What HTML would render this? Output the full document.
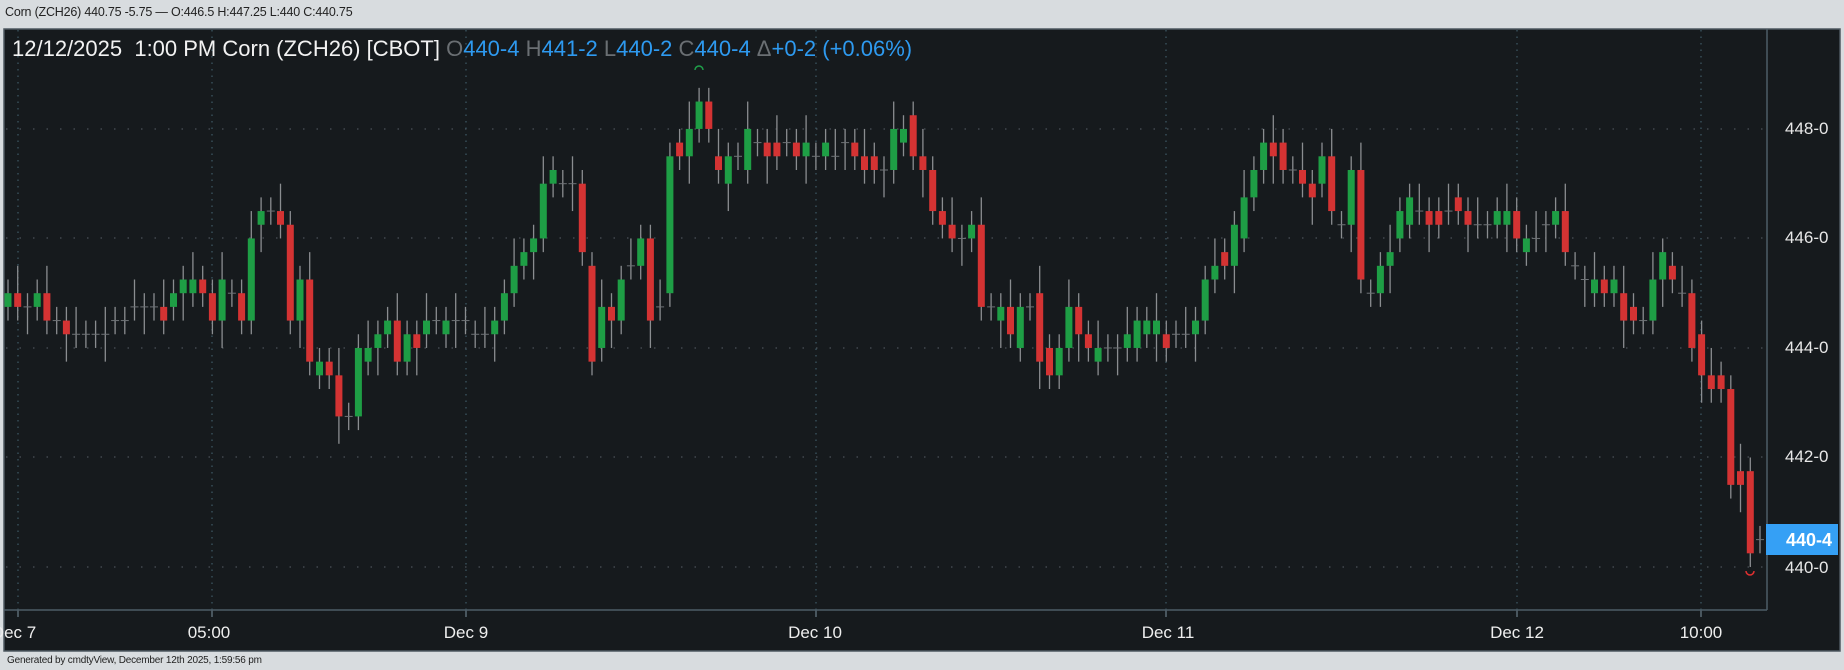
<!DOCTYPE html>
<html><head><meta charset="utf-8">
<style>
html,body{margin:0;padding:0;}
body{width:1844px;height:670px;background:#d8dcdf;position:relative;overflow:hidden;font-family:"Liberation Sans",sans-serif;}
#top{position:absolute;left:5px;top:5px;font-size:12.5px;color:#222;letter-spacing:-0.2px}
#foot{position:absolute;left:7px;top:655px;font-size:10px;color:#222;letter-spacing:-0.2px}
svg{position:absolute;left:0;top:0}
</style></head><body>
<div id="top">Corn (ZCH26) 440.75 -5.75 — O:446.5 H:447.25 L:440 C:440.75</div>
<svg id="s" width="1844" height="670" xmlns="http://www.w3.org/2000/svg">
<rect x="4" y="29" width="1836" height="622" fill="#161a1d" stroke="#4d5860" stroke-width="1.5"/>
<g id="grid"></g>
<g id="c"></g>
<line x1="1767" y1="29" x2="1767" y2="610" stroke="#4d5c66" stroke-width="1.5"/>
<line x1="4" y1="610" x2="1767" y2="610" stroke="#4d5c66" stroke-width="1.5"/>
<g font-family="Liberation Sans, sans-serif" font-size="17" fill="#e8e8e8">
<text x="1785" y="134">448-0</text>
<text x="1785" y="243">446-0</text>
<text x="1785" y="353">444-0</text>
<text x="1785" y="462">442-0</text>
<text x="1785" y="573">440-0</text>
</g>
<rect x="1766" y="524" width="72" height="31" fill="#35a0f5"/>
<text x="1832" y="546" text-anchor="end" font-family="Liberation Sans, sans-serif" font-size="18" font-weight="bold" fill="#fff">440-4</text>
<g font-family="Liberation Sans, sans-serif" font-size="17" fill="#eee" text-anchor="middle">
<text x="14" y="638">Dec 7</text>
<text x="209" y="638">05:00</text>
<text x="466" y="638">Dec 9</text>
<text x="815" y="638">Dec 10</text>
<text x="1168" y="638">Dec 11</text>
<text x="1517" y="638">Dec 12</text>
<text x="1701" y="638">10:00</text>
</g>
<text x="12" y="56" font-family="Liberation Sans, sans-serif" font-size="22" xml:space="preserve"><tspan fill="#f2f2f2">12/12/2025  1:00 PM Corn (ZCH26) [CBOT] </tspan><tspan fill="#6a6f73">O</tspan><tspan fill="#2e9af0">440-4 </tspan><tspan fill="#6a6f73">H</tspan><tspan fill="#2e9af0">441-2 </tspan><tspan fill="#6a6f73">L</tspan><tspan fill="#2e9af0">440-2 </tspan><tspan fill="#6a6f73">C</tspan><tspan fill="#2e9af0">440-4 </tspan><tspan fill="#6a6f73">Δ</tspan><tspan fill="#2e9af0">+0-2 (+0.06%)</tspan></text>
<path d="M695 70 A4 4 0 0 1 703 70" fill="none" stroke="#1fa04a" stroke-width="1.5"/>
<path d="M1746 571 A4 4 0 0 0 1754 571" fill="none" stroke="#e03030" stroke-width="1.5"/>
</svg>
<div id="foot">Generated by cmdtyView, December 12th 2025, 1:59:56 pm</div>
<script>
(function(){
var NS="http://www.w3.org/2000/svg";
function el(p,n,a){var e=document.createElementNS(NS,n);for(var k in a)e.setAttribute(k,a[k]);p.appendChild(e);}
var d=[[19,20],[20,19],[19,19],[19,20],[20,18],[18,18],[18,17],[17,17],[17,17],[17,17],[17,17],[18,18],[18,18],[19,19],[19,19],[19,19],[19,18],[19,20],[20,21],[20,21],[21,20],[20,18],[18,21],[20,20],[20,18],[18,24],[25,26],[26,26],[26,25],[25,18],[18,21],[21,15],[14,15],[15,14],[14,11],[11,11],[11,16],[15,16],[16,17],[17,18],[18,15],[15,17],[17,16],[17,18],[18,18],[17,18],[18,18],[18,18],
[17,17],[17,17],[17,18],[18,20],[20,22],[22,23],[23,24],[24,28],[28,29],[28,28],[28,28],[28,23],[22,15],[16,19],[19,18],[18,21],[22,22],[22,24],[24,18],[19,19],[20,30],[31,30],[30,32],[32,34],[34,32],[30,29],[28,30],[30,30],[29,32],[31,31],[31,30],[31,30],[31,31],[31,30],[30,31],[30,30],[30,31],[30,30],[31,31],[31,30],[30,29],[30,29],[29,29],[29,32],[31,32],[33,30],[30,29],[29,26],[26,25],
[25,24],[24,24],[24,25],[25,19],[19,19],[18,19],[19,17],[16,19],[19,19],[20,15],[16,14],[14,16],[16,19],[19,17],[17,16],[15,16],[16,16],[16,16],[16,17],[16,18],[17,18],[17,18],[17,16],[17,17],[17,17],[17,18],[18,21],[21,22],[23,22],[22,25],[24,27],[27,29],[29,31],[31,30],[31,29],[29,29],[29,28],[28,27],[28,30],[30,26],[25,25],[25,29],[29,21],[20,20],[20,22],[22,23],
[24,26],[25,27],[26,26],[26,25],[26,25],[26,26],[27,26],[26,25],[25,25],[25,25],[25,26],[25,26],[26,24],[23,24],[24,24],[25,25],[25,26],[26,23],[22,22],[21,21],[20,21],[21,20],[20,21],[20,18],[19,18],[18,18],[18,21],[21,23],[22,21],[20,20],[20,16],[17,14],[14,13],[14,13],[13,6],[7,6],[7,1],[2,2]];
var N=d.length,x0=8,x1=1760,st=(x1-x0)/(N-1);
function Y(t){return +(567-t*13.69).toFixed(2);}
var cg=document.getElementById('c');
for(var i=0;i<N;i++){var o=d[i][0],c=d[i][1],x=+(x0+i*st).toFixed(1);
var hi=Math.max(o,c)+1,lo=Math.min(o,c)-1;
if(i%3==1)hi+=1; if(i%4==2)lo-=1;
if(i==N-2)lo=0;
el(cg,'line',{x1:x,x2:x,y1:Y(hi),y2:Y(lo),stroke:'#8a8d90','stroke-width':1.3});
if(o==c){el(cg,'line',{x1:x-4,x2:x+4,y1:Y(o),y2:Y(o),stroke:'#6f7377','stroke-width':1});}
else{var ty=Y(Math.max(o,c)),by=Y(Math.min(o,c));
el(cg,'rect',{x:(x-3.5).toFixed(1),y:ty,width:7,height:(by-ty).toFixed(2),fill:(c>o?'#1e9e45':'#d43333')});}
}
var gg=document.getElementById('grid');
[129,238,348,457,567].forEach(function(y){el(gg,'line',{x1:6,x2:1767,y1:y,y2:y,stroke:'#4b5258','stroke-width':1.2,'stroke-dasharray':'1.5 12'});});
[18,212,466,816,1166,1517,1701].forEach(function(x){el(gg,'line',{x1:x,x2:x,y1:30,y2:610,stroke:'#3f5a66','stroke-width':1.2,'stroke-dasharray':'1.5 5'});el(gg,'line',{x1:x,x2:x,y1:610,y2:617,stroke:'#5a6a74','stroke-width':1.5});});
})();
</script>
</body></html>
